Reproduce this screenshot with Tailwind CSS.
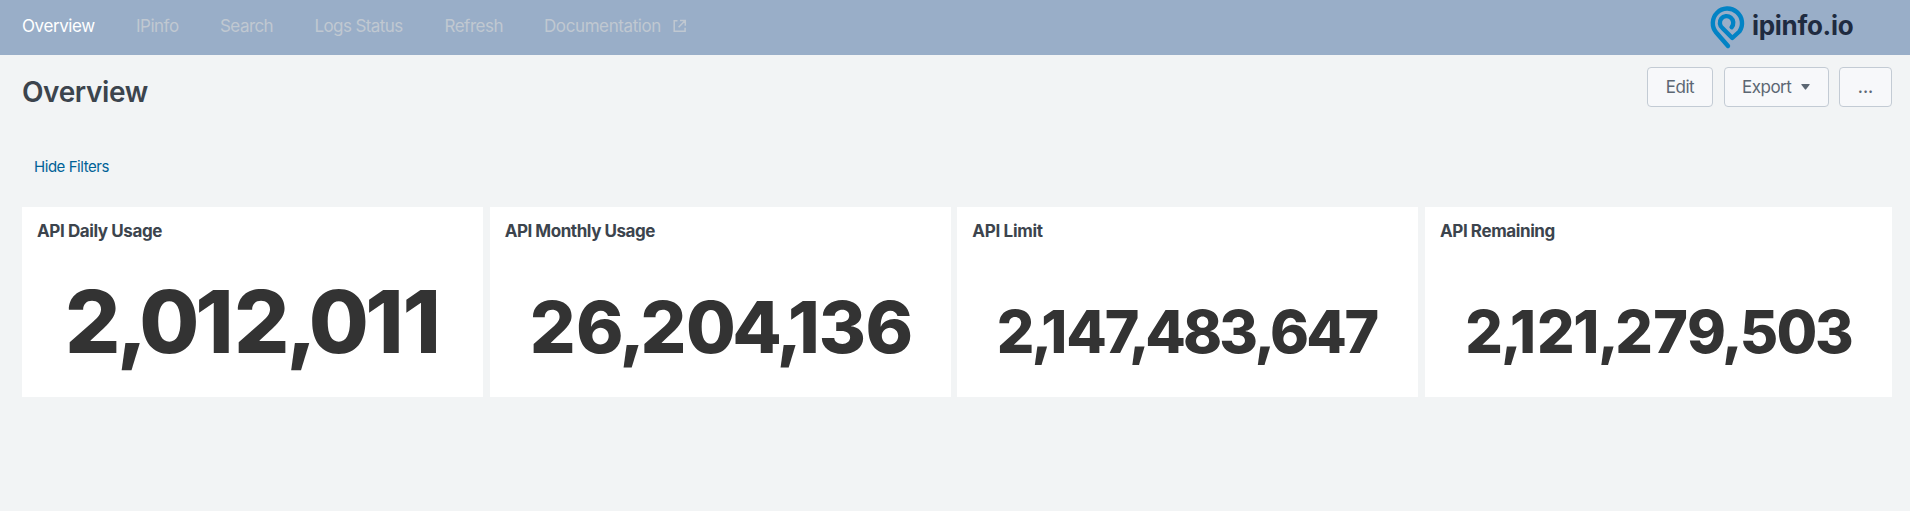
<!DOCTYPE html>
<html lang="en">
<head>
<meta charset="utf-8">
<title>Overview</title>
<script src="https://cdn.jsdelivr.net/npm/@tailwindcss/browser@4"></script>
</head>
<body class="min-h-screen bg-[#f2f4f5] font-['Inter','Liberation_Sans',sans-serif] text-[#3c444d]">
<header class="flex h-[55px] items-start justify-between bg-[#99aec8] pl-[22px] pr-[56px]">
  <nav class="flex pt-[14px] text-[17px] leading-[24px] text-[#c0c8d1]">
    <a class="w-[114px] tracking-[-0.4px] text-white">Overview</a>
    <a class="w-[84px] tracking-[-0.5px]">IPinfo</a>
    <a class="w-[94.5px] tracking-[-0.55px]">Search</a>
    <a class="w-[130px] tracking-[-0.6px]">Logs Status</a>
    <a class="w-[99.5px] tracking-[-0.5px]">Refresh</a>
    <a class="flex tracking-[-0.4px]">Documentation
      <svg class="ml-[12px] mt-[5px] size-[14px]" viewBox="0 0 14 14" fill="none" stroke="currentColor" stroke-width="1.5"><path d="M4.5 1.7H1.2v10.6h10.9V8.8M7 1.5h5.3v5.3M12 1.8 5.6 8.2"/></svg>
    </a>
  </nav>
  <div class="flex">
    <svg class="h-[54px] w-[47px]" viewBox="1705 0 47 54" fill="none" stroke="#0283c5" stroke-width="4.4" stroke-linecap="round" stroke-linejoin="round"><path d="M1728 46 1716.2 32.5A14.6 14.6 0 1 1 1739.4 31.5L1732.3 38 1722.6 28.2A6.7 6.7 0 1 1 1731.6 27.2"/></svg>
    <span class="w-[102px] pt-[9px] text-[26px] font-bold leading-[34px] tracking-[-0.3px] text-[#1f2b40]">ipinfo.io</span>
  </div>
</header>
<main class="pl-[22px] pr-[18px]">
  <div class="flex h-[96px] items-start justify-between pt-[12px]">
    <h1 class="pt-[7px] text-[28px] font-semibold leading-[36px] tracking-[-0.4px]">Overview</h1>
    <div class="flex text-[17px] leading-[24px] text-[#5c6773]">
      <button class="h-[40px] w-[66px] rounded-[4px] border border-[#c3cbd4] bg-[#f7f8fa] pb-[1px] tracking-[-0.5px]">Edit</button>
      <button class="ml-[11px] flex h-[40px] w-[105px] items-center rounded-[4px] border border-[#c3cbd4] bg-[#f7f8fa] pb-[1px] pl-[17px] tracking-[-0.5px]">Export
        <svg class="ml-[10px] h-[6px] w-[9px]" viewBox="0 0 9 6" fill="currentColor"><path d="M.8 0h7.4q.8 0 .4.7L5.1 5.3q-.6.7-1.2 0L.4.7Q0 0 .8 0Z"/></svg>
      </button>
      <button class="ml-[10px] h-[40px] w-[53px] rounded-[4px] border border-[#c3cbd4] bg-[#f7f8fa] font-medium">...</button>
    </div>
  </div>
  <div class="h-[56px] pl-[12px] pt-[6px] text-[15px] leading-[20px] tracking-[-0.45px] text-[#006297]">Hide Filters</div>
  <section class="grid h-[190px] grid-cols-[461px_461px_461px_467px] text-[#3c444d]" style="column-gap:6.66px">
    <article class="flex flex-col bg-white">
      <h2 class="h-[40px] pl-[15px] pt-[12px] text-[17px] font-bold leading-[24px] tracking-[-0.4px]">API Daily Usage</h2>
      <svg class="h-[150px] w-full" viewBox="22 247 461 150"><text y="353" x="92.7 132 169.3 214.5 261.8 301.5 338.8 384.5 421.8" class="fill-[#333] text-[87px] font-extrabold" text-anchor="middle">2,012,011</text></svg>
    </article>
    <article class="flex flex-col bg-white">
      <h2 class="h-[40px] pl-[15px] pt-[12px] text-[17px] font-bold leading-[24px] tracking-[-0.45px]">API Monthly Usage</h2>
      <svg class="h-[150px] w-full" viewBox="490 247 461 150"><text y="353" x="552.8 599.9 632.3 663.5 710.8 757 789.3 804 842.5 889.3" class="fill-[#333] text-[72px] font-extrabold" text-anchor="middle">26,204,136</text></svg>
    </article>
    <article class="flex flex-col bg-white">
      <h2 class="h-[40px] pl-[15px] pt-[12px] text-[17px] font-bold leading-[24px] tracking-[-0.3px]">API Limit</h2>
      <svg class="h-[150px] w-full" viewBox="957 247 461 150"><text y="353" x="1015.5 1042 1054.3 1086.5 1122 1139.5 1165.5 1202.5 1238.5 1264.8 1289.5 1326.5 1361.8" class="fill-[#333] text-[59px] font-extrabold" text-anchor="middle">2,147,483,647</text></svg>
    </article>
    <article class="flex flex-col bg-white">
      <h2 class="h-[40px] pl-[15px] pt-[12px] text-[17px] font-bold leading-[24px] tracking-[-0.4px]">API Remaining</h2>
      <svg class="h-[150px] w-full" viewBox="1425 247 467 150"><text y="353" x="1484 1511.3 1523 1555.8 1586.3 1608.3 1634 1670.5 1706.5 1732.3 1759 1797 1834.3" class="fill-[#333] text-[59px] font-extrabold" text-anchor="middle">2,121,279,503</text></svg>
    </article>
  </section>
</main>
</body>
</html>
